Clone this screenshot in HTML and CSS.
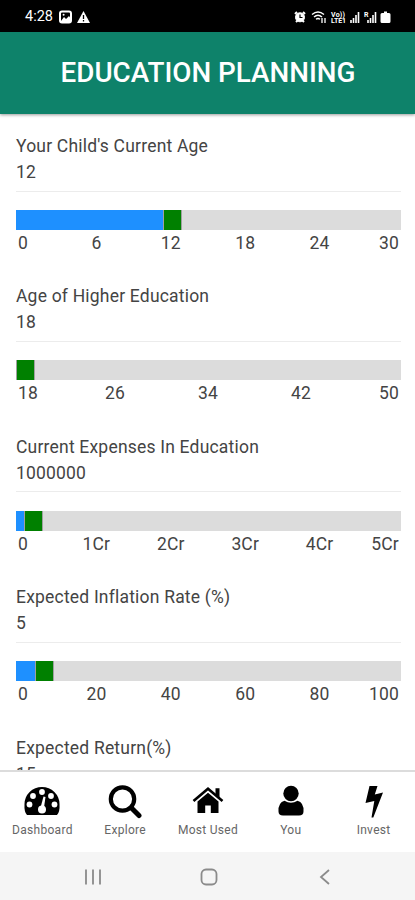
FILE: index.html
```html
<!DOCTYPE html>
<html lang="en">
<head>
<meta charset="utf-8">
<title>Education Planning</title>
<link rel="stylesheet" href="styles.css">
</head>
<body>
<div class="phone">
  <div class="status">
    <span class="clock">4:28</span>
    <svg class="notes" width="34" height="14" viewBox="0 0 34 14">
      <rect x="1" y="1.5" width="11" height="11" rx="2" fill="none" stroke="#fff" stroke-width="2"/>
      <path d="M2 11l3-4 2 2 3-3 2 3v3H2z" fill="#fff"/><circle cx="4.6" cy="4.8" r="1" fill="#fff"/>
      <path d="M24.500 1L31 13H18z" fill="#fff"/><path d="M24.500 5v4M24.500 10v1.500" stroke="#000" stroke-width="1.300"/>
    </svg>
    <svg class="signals" width="100" height="14" viewBox="0 0 100 14">
      <g fill="none" stroke="#fff">
        <circle cx="7" cy="7.300" r="4.500" fill="#fff"/><path d="M2 4l2-2M10 2l2 2M3 12l2-2M11 12l-2-2" stroke-width="2"/>
        <path d="M7 4.500v3h2.500" stroke="#000" stroke-width="1.200"/>
        <path d="M19 4.500q6-5 12 0M21 7q4-3.500 8 0M23 9.300q2-1.500 4 0" stroke-width="1.400"/><path d="M29 8v5M32 8v5" stroke-width="1.300"/>
        <path d="M58 13v-3M60.500 13V8M63 13V5M65.500 13V2M75 13v-3M77.500 13V8M80 13V5M82.500 13V2" stroke-width="1.600"/>
      </g>
      <g class="tiny"><text x="38" y="6.500" textLength="14">Vo))</text><text x="38" y="13" textLength="15">LTE1</text><text x="71" y="6.500">R</text></g>
      <path d="M91 1.500h3V3h2q1.500 0 1.500 1.500v7q0 1.500-1.500 1.500h-7q-1.500 0-1.500-1.500v-7Q87.500 3 89 3h2z" fill="#fff"/>
    </svg>
  </div>
  <header class="header"><h1>EDUCATION PLANNING</h1></header>
  <main class="form">
    <section class="field">
      <div class="label">Your Child's Current Age</div><div class="value">12</div>
      <div class="track"><i class="fill f1"></i><i class="thumb"></i></div>
      <div class="ticks"><span>0</span><span>6</span><span>12</span><span>18</span><span>24</span><span>30</span></div>
    </section>
    <section class="field">
      <div class="label">Age of Higher Education</div><div class="value">18</div>
      <div class="track"><i class="fill f2"></i><i class="thumb"></i></div>
      <div class="ticks"><span>18</span><span>26</span><span>34</span><span>42</span><span>50</span></div>
    </section>
    <section class="field">
      <div class="label">Current Expenses In Education</div><div class="value">1000000</div>
      <div class="track"><i class="fill f3"></i><i class="thumb"></i></div>
      <div class="ticks"><span>0</span><span>1Cr</span><span>2Cr</span><span>3Cr</span><span>4Cr</span><span>5Cr</span></div>
    </section>
    <section class="field">
      <div class="label">Expected Inflation Rate (%)</div><div class="value">5</div>
      <div class="track"><i class="fill f4"></i><i class="thumb"></i></div>
      <div class="ticks"><span>0</span><span>20</span><span>40</span><span>60</span><span>80</span><span>100</span></div>
    </section>
    <section class="field">
      <div class="label">Expected Return(%)</div><div class="value">15</div>
    </section>
  </main>
  <nav class="tabs">
    <a class="tab"><svg width="36" height="36" viewBox="0 0 36 36"><path d="M3 31Q0 28 .5 20a17.500 17 0 0 1 35 0q.5 8-2.500 11z"/><g fill="#fff"><circle cx="18" cy="8" r="2.900"/><circle cx="9" cy="12" r="2.900"/><circle cx="27" cy="12" r="2.900"/><circle cx="5.500" cy="20.500" r="2.900"/><circle cx="30.500" cy="20.500" r="2.900"/><circle cx="18" cy="25.500" r="4"/><path d="M16.300 24.500l3.200-12 2 .5-1.700 12z"/></g></svg><span>Dashboard</span></a>
    <a class="tab"><svg width="34" height="36" viewBox="0 0 34 36"><circle cx="14.500" cy="15" r="11.700" fill="none" stroke="#000" stroke-width="4.200"/><path d="M23.500 24l7.500 7.500" stroke="#000" stroke-width="5" stroke-linecap="round"/></svg><span>Explore</span></a>
    <a class="tab"><svg width="34" height="36" viewBox="0 0 34 36"><path d="M2.500 17L17 4.700l14.500 12.300" fill="none" stroke="#000" stroke-width="2.600"/><path d="M24.500 4.200h4v10.500l-4-3.500zM6.500 17.500L17 8.700l10.500 8.800V29h-7.700v-7.500h-5.600V29H6.500z"/></svg><span>Most Used</span></a>
    <a class="tab"><svg width="34" height="36" viewBox="0 0 34 36"><circle cx="17" cy="9.500" r="7.700"/><path d="M10.500 16.700q6.500 4 13 0Q30 18.500 29.500 27.500q0 4-4.500 4H9q-4.500 0-4.500-4-.5-9 6-10.800z"/></svg><span>You</span></a>
    <a class="tab"><svg width="34" height="36" viewBox="0 0 34 36"><path d="M12.500 2h8L17.800 10.500l8.200-2-9.700 25H14.500L17.300 17 8.500 19z"/></svg><span>Invest</span></a>
  </nav>
  <div class="system">
    <svg width="20" height="20" viewBox="0 0 20 20"><path d="M3 2.500v15M10 2.500v15M17 2.500v15"/></svg>
    <svg width="20" height="20" viewBox="0 0 20 20"><rect x="2.500" y="2.500" width="15" height="15" rx="4.500"/></svg>
    <svg width="20" height="20" viewBox="0 0 20 20"><path d="M14 3L6 10l8 7"/></svg>
  </div>
</div>
</body>
</html>
```
FILE: styles.css
```css
* { box-sizing: border-box; }
body { margin: 0; background: #fff; font-family: Roboto, sans-serif; }
.phone { width: 415px; height: 900px; display: flex; flex-direction: column; overflow: hidden; }
.status { height: 32px; flex: none; background: #000; color: #fff; display: flex; align-items: center; padding: 1px 0 0 25px; }
.clock { width: 34px; font-size: 14.500px; font-weight: 400; line-height: 16px; }
.signals { margin-left: 200px; }
.tiny { fill: #fff; font-size: 7px; font-weight: 700; }
.header { height: 82px; flex: none; background: #0e826a; color: #fff; display: flex; align-items: center; justify-content: center; box-shadow: 0 1px 3px rgba(0,0,0,.4); position: relative; }
h1 { margin: 0; font-size: 27.800px; font-weight: 500; line-height: 34px; white-space: nowrap; padding: 0 0 1px 1px; }
.form { flex: 1; min-height: 0; overflow: hidden; padding: 20px 14px 0 16px; }
.field { height: 150.4px; font-size: 17.500px; color: #444; letter-spacing: .15px; }
.label { line-height: 25px; white-space: nowrap; letter-spacing: .2px; }
.value { height: 32.500px; line-height: 26px; border-bottom: 1px solid #ececec; }
.track { height: 20px; margin-top: 18.500px; background: #dcdcdc; display: flex; }
.fill { background: #1e90ff; }
.f1 { width: 147px; }
.f2 { width: 0; }
.f3 { width: 8px; }
.f4 { width: 19px; }
.thumb { width: 19px; background: #008000; border: solid #a0a0a0; border-width: 0 1px; }
.ticks { height: 26px; line-height: 26px; padding: 0 7px 0 6px; display: flex; justify-content: space-between; }
.ticks span { width: 0; display: flex; justify-content: center; }
.ticks span:first-child { justify-content: flex-start; margin-left: -4px; margin-right: 4px; }
.ticks span:last-child { justify-content: flex-end; margin-right: -5px; margin-left: 5px; }
.tabs { height: 82px; flex: none; display: flex; border-top: 2px solid #dcdcdc; background: #fff; padding-left: 1px; }
.tab { width: 20%; display: flex; flex-direction: column; align-items: center; padding-top: 12px; }
.tab span { font-size: 12px; line-height: 16px; letter-spacing: .3px; color: #666; margin-top: 2px; white-space: nowrap; }
.system { height: 48px; flex: none; background: #f5f5f5; display: flex; align-items: center; justify-content: space-between; padding: 2px 80px 0 83px; }
.system svg { fill: none; stroke: #8b8b8b; stroke-width: 1.800; }
```
